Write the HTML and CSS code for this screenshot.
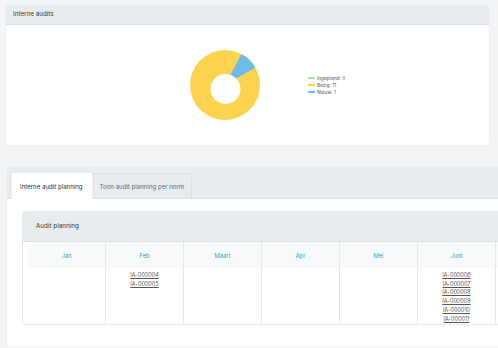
FILE: index.html
```html
<!DOCTYPE html>
<html lang="nl">
<head>
    <meta charset="UTF-8">
    <meta name="viewport" content="width=device-width, initial-scale=1.0">
    <title>Interne audits</title>
    <link rel="stylesheet" href="styles.css">
</head>
<body>
    <div class="card chart-card">
        <div class="card-header">Interne audits</div>
        <div class="chart-body">
            <svg class="donut" width="70" height="70" viewBox="0 0 70 70">
                <circle cx="35" cy="35" r="35" fill="#fdd24f"/>
                <path d="M35 35 L51.4 4.1 A35 35 0 0 1 65.3 17.5 Z" fill="#6cbcec"/>
                <circle cx="35.5" cy="39" r="15" fill="#fff"/>
            </svg>
            <ul class="legend">
                <li><span class="swatch green"></span>Ingepland: 0</li>
                <li><span class="swatch yellow"></span>Bezig: 11</li>
                <li><span class="swatch blue"></span>Nieuw: 1</li>
            </ul>
        </div>
    </div>

    <div class="card planning-card">
        <div class="tabs">
            <div class="tab active">Interne audit planning</div>
            <div class="tab">Toon audit planning per norm</div>
        </div>
        <div class="tab-body">
            <div class="inner-card">
                <div class="inner-header">Audit planning</div>
                <table class="planning">
                    <thead>
                        <tr>
                            <th>Jan</th><th>Feb</th><th>Maart</th><th>Apr</th><th>Mei</th><th>Juni</th><th></th>
                        </tr>
                    </thead>
                    <tbody>
                        <tr>
                            <td></td>
                            <td><a href="#">IA-000004</a><a href="#">IA-000005</a></td>
                            <td></td>
                            <td></td>
                            <td></td>
                            <td>
                                <a href="#">IA-000006</a><a href="#">IA-000007</a><a href="#">IA-000008</a>
                                <a href="#">IA-000009</a><a href="#">IA-000010</a><a href="#">IA-000011</a>
                            </td>
                            <td></td>
                        </tr>
                    </tbody>
                </table>
            </div>
        </div>
    </div>
</body>
</html>
```

FILE: styles.css
```css
body {
    font-family: 'Inter', 'Liberation Sans', sans-serif;
    margin: 0;
    padding: 5px 0 0 6px;
    background-color: #f4f5f7;
    color: #3a3a3a;
    overflow: hidden;
}
.card {
    background: white;
    border-radius: 3px;
    box-shadow: 0 0 2px rgba(0,0,0,0.06);
}
.chart-card {
    width: 483px;
}
.card-header {
    height: 19px;
    line-height: 19px;
    padding-left: 7px;
    font-size: 6.3px;
    background: #e9ecef;
    border-bottom: 1px solid #dde1e5;
    border-radius: 3px 3px 0 0;
}
.chart-body {
    height: 120px;
    display: flex;
    align-items: center;
}
.donut {
    margin-left: 184px;
}
.legend {
    list-style: none;
    margin: 0 0 0 48px;
    padding: 0;
    font-size: 4.8px;
    line-height: 7px;
    color: #555;
}
.legend li {
    display: flex;
    align-items: center;
}
.swatch {
    width: 7px;
    height: 2px;
    margin-right: 2px;
}
.green { background: #a4e3b8; }
.yellow { background: #fdd24f; }
.blue { background: #6cbcec; }

.planning-card {
    width: 620px;
    margin: 22px 0 0 1px;
}
.tabs {
    display: flex;
    height: 25px;
    padding: 6px 0 0 5px;
    background: #e9ecef;
    border-bottom: 1px solid #dde1e5;
    border-radius: 3px 3px 0 0;
}
.tab {
    font-size: 6.1px;
    line-height: 25px;
    white-space: nowrap;
    padding: 0 7px 0 8px;
    margin-bottom: -1px;
    color: #666;
    border: 1px solid #dde1e5;
    border-bottom: none;
    border-left: none;
}
.tab.active {
    background: white;
    color: #2a2a2a;
    padding: 0 8px;
    border-color: transparent;
}
.tab-body {
    padding: 12px 15px 21px 15px;
}
.inner-card {
    border: 1px solid #e6e9ec;
    border-radius: 3px;
}
.inner-header {
    height: 29px;
    line-height: 29px;
    padding-left: 13px;
    font-size: 6.3px;
    background: #e9ecef;
    border-bottom: 1px solid #dde1e5;
}
.planning {
    margin-left: 5px;
    border-collapse: collapse;
    table-layout: fixed;
}
.planning th {
    width: 77px;
    height: 26px;
    padding: 0;
    font-size: 5.8px;
    font-weight: normal;
    color: #1fa8c0;
    background: #f8f9fb;
    border-right: 1px solid #e6e9ec;
}
.planning td {
    height: 56px;
    padding: 3px 0 0 0;
    box-sizing: border-box;
    vertical-align: top;
    text-align: center;
    border-right: 1px solid #e6e9ec;
}
.planning a {
    display: block;
    font-size: 5.5px;
    line-height: 8.7px;
    color: #555;
}
```
